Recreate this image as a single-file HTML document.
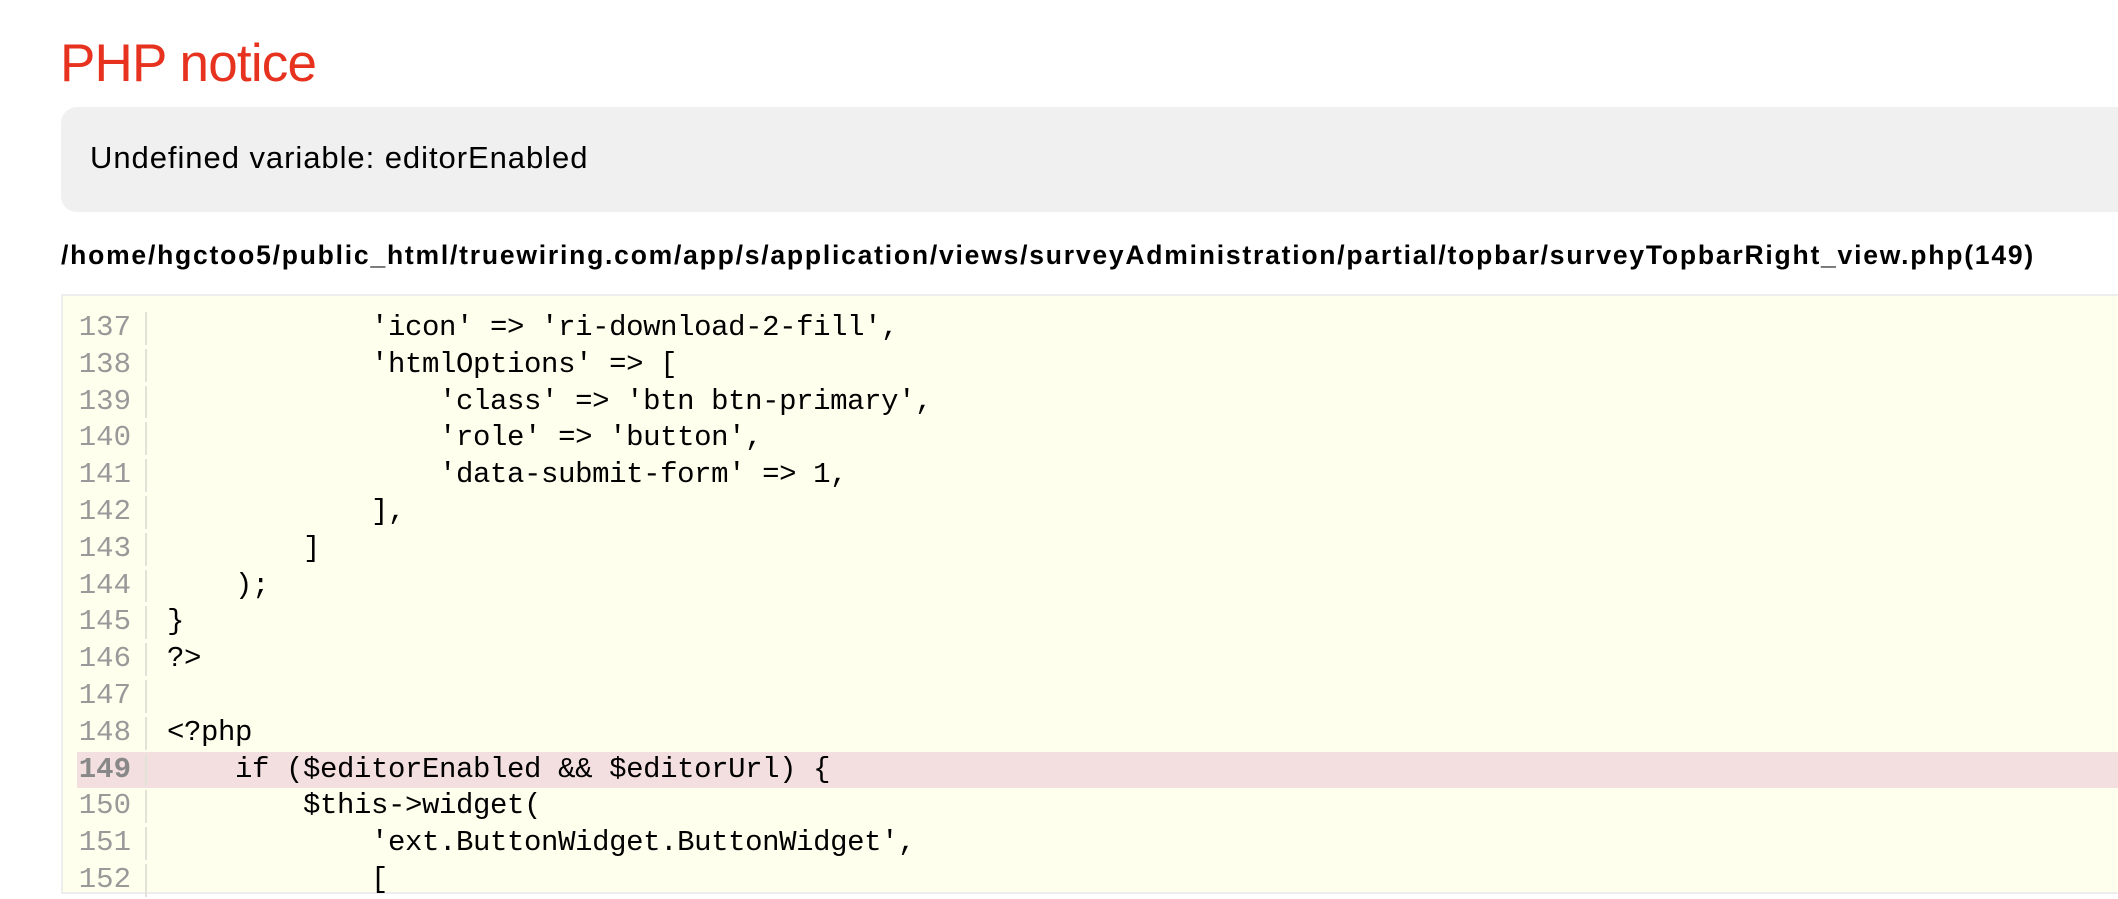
<!DOCTYPE html>
<html><head><meta charset="utf-8"><style>
html,body{margin:0;padding:0;background:#fff;width:2118px;height:866px;overflow:hidden;font-family:"Liberation Sans",Arial,sans-serif;}
h1{position:absolute;left:60px;top:29px;margin:0;font-weight:normal;font-size:53px;color:#e6321e;line-height:70px;letter-spacing:-0.8px}
.msg{position:absolute;left:61px;top:107px;width:2200px;height:105px;background:#f0f0f0;border-radius:16px;}
.msg span{position:absolute;left:29px;top:34px;font-size:31px;color:#000;line-height:34px;letter-spacing:0.95px}
.path{position:absolute;left:61px;top:238px;font-size:26.5px;font-weight:bold;color:#000;line-height:34px;white-space:nowrap;letter-spacing:1.78px}
.code{position:absolute;left:61px;top:294px;width:2200px;height:600px;background:#ffffee;border:2px solid #eee;box-sizing:border-box;padding-top:14px}
.ln{position:relative;height:36.8px;line-height:36.8px;font-family:"Liberation Mono",monospace;font-size:29px;white-space:pre;}
.n{position:absolute;left:14px;width:54px;text-align:right;color:#999;}
.s{position:absolute;left:82px;top:2px;bottom:2px;border-left:2px solid #e2e2d8}
.t{position:absolute;left:104px;color:#000;letter-spacing:-0.4px}
.hl{background:#f3dfdf;margin-left:14px}
.hl .n{left:0;font-weight:bold;color:#888}
.hl .s{left:68px}
.hl .t{left:90px}
</style></head><body>
<h1>PHP notice</h1>
<div class="msg"><span>Undefined variable: editorEnabled</span></div>
<div class="path">/home/hgctoo5/public_html/truewiring.com/app/s/application/views/surveyAdministration/partial/topbar/surveyTopbarRight_view.php(149)</div>
<div class="code">
<div class="ln"><span class="n">137</span><span class="s"></span><span class="t">            'icon' =&gt; 'ri-download-2-fill',</span></div>
<div class="ln"><span class="n">138</span><span class="s"></span><span class="t">            'htmlOptions' =&gt; [</span></div>
<div class="ln"><span class="n">139</span><span class="s"></span><span class="t">                'class' =&gt; 'btn btn-primary',</span></div>
<div class="ln"><span class="n">140</span><span class="s"></span><span class="t">                'role' =&gt; 'button',</span></div>
<div class="ln"><span class="n">141</span><span class="s"></span><span class="t">                'data-submit-form' =&gt; 1,</span></div>
<div class="ln"><span class="n">142</span><span class="s"></span><span class="t">            ],</span></div>
<div class="ln"><span class="n">143</span><span class="s"></span><span class="t">        ]</span></div>
<div class="ln"><span class="n">144</span><span class="s"></span><span class="t">    );</span></div>
<div class="ln"><span class="n">145</span><span class="s"></span><span class="t">}</span></div>
<div class="ln"><span class="n">146</span><span class="s"></span><span class="t">?&gt;</span></div>
<div class="ln"><span class="n">147</span><span class="s"></span><span class="t"></span></div>
<div class="ln"><span class="n">148</span><span class="s"></span><span class="t">&lt;?php</span></div>
<div class="ln hl"><span class="n">149</span><span class="s"></span><span class="t">    if ($editorEnabled &amp;&amp; $editorUrl) {</span></div>
<div class="ln"><span class="n">150</span><span class="s"></span><span class="t">        $this-&gt;widget(</span></div>
<div class="ln"><span class="n">151</span><span class="s"></span><span class="t">            'ext.ButtonWidget.ButtonWidget',</span></div>
<div class="ln"><span class="n">152</span><span class="s"></span><span class="t">            [</span></div>
</div>
</body></html>
